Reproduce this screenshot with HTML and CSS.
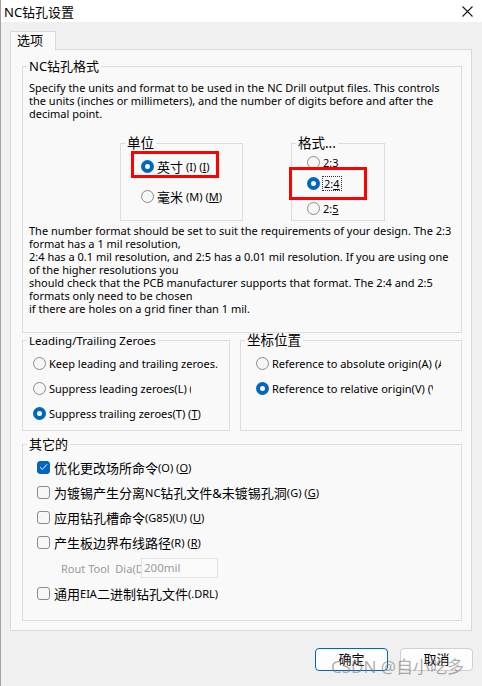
FILE: index.html
```html
<!DOCTYPE html>
<html lang="zh-CN">

<head>
    <meta charset="UTF-8">
    <meta name="viewport" content="width=device-width, initial-scale=1.0">
    <link rel="stylesheet" href="styles.css">
</head>

<body>
    <div class="window">
        <div class="titlebar">
            <span class="title">NC钻孔设置</span>
            <svg class="close" width="11" height="11" viewBox="0 0 11 11">
                <path d="M0.5 0.5L10.5 10.5M10.5 0.5L0.5 10.5" stroke="#1b1b1b" stroke-width="1.1" fill="none" />
            </svg>
        </div>

        <div class="content">
            <div class="tab">选项</div>
            <div class="panel">
                <fieldset class="group nc">
                    <legend>NC钻孔格式</legend>
                    <p class="desc">Specify the units and format to be used in the NC Drill output files. This controls<br>the units (inches or millimeters), and the number of digits before and after the<br>decimal point.</p>

                    <div class="format-row">
                        <fieldset class="group unit">
                            <legend class="big">单位</legend>
                            <div class="opt first"><span class="radio on"></span><span class="cn">英寸</span><span class="key">(I) (<u>I</u>)</span></div>
                            <div class="opt second"><span class="radio"></span><span class="cn">毫米</span><span class="key">(M) (<u>M</u>)</span></div>
                        </fieldset>
                        <fieldset class="group fmt">
                            <legend class="big">格式...</legend>
                            <div class="opt f1"><span class="radio"></span><span>2:<u>3</u></span></div>
                            <div class="opt f2"><span class="radio on"></span><span class="focus">2:<u>4</u></span></div>
                            <div class="opt f3"><span class="radio"></span><span>2:<u>5</u></span></div>
                        </fieldset>
                    </div>

                    <p class="desc second-desc">The number format should be set to suit the requirements of your design. The 2:3<br>format has a 1 mil resolution,<br>2:4 has a 0.1 mil resolution, and 2:5 has a 0.01 mil resolution. If you are using one<br>of the higher resolutions you<br>should check that the PCB manufacturer supports that format. The 2:4 and 2:5<br>formats only need to be chosen<br>if there are holes on a grid finer than 1 mil.</p>
                </fieldset>

                <div class="pair">
                    <fieldset class="group zeroes">
                        <legend>Leading/Trailing Zeroes</legend>
                        <div class="opt row"><span class="radio"></span><span class="clip keep">Keep leading and trailing zeroes.(K) (K)</span></div>
                        <div class="opt row"><span class="radio"></span><span class="clip lead">Suppress leading zeroes(L) (L)</span></div>
                        <div class="opt row"><span class="radio on"></span><span>Suppress trailing zeroes(T) (<u>T</u>)</span></div>
                    </fieldset>
                    <fieldset class="group origin">
                        <legend class="big">坐标位置</legend>
                        <div class="opt row"><span class="radio"></span><span class="clip abs">Reference to absolute origin(A) (A)</span></div>
                        <div class="opt row"><span class="radio on"></span><span class="clip rel">Reference to relative origin(V) (V)</span></div>
                    </fieldset>
                </div>

                <fieldset class="group other">
                    <legend>其它的</legend>
                    <div class="opt check-row">
                        <span class="check on"><svg width="9" height="8" viewBox="0 0 9 8"><path d="M1 4.2L3.4 6.5L8 1.3" stroke="#fff" stroke-width="1" fill="none" /></svg></span>
                        <span class="cn">优化更改场所命令</span><span class="key">(O) (<u>O</u>)</span>
                    </div>
                    <div class="opt check-row">
                        <span class="check"></span>
                        <span class="cn">为镀锡产生分离</span><span class="key">NC</span><span class="cn">钻孔文件&amp;未镀锡孔洞</span><span class="key">(G) (<u>G</u>)</span>
                    </div>
                    <div class="opt check-row">
                        <span class="check"></span>
                        <span class="cn">应用钻孔槽命令</span><span class="key">(G85)(U) (<u>U</u>)</span>
                    </div>
                    <div class="opt check-row">
                        <span class="check"></span>
                        <span class="cn">产生板边界布线路径</span><span class="key">(R) (<u>R</u>)</span>
                    </div>
                    <div class="rout-row">
                        <span class="rout-label">Rout Tool&nbsp;&nbsp;Dia(D)</span>
                        <span class="rout-input">200mil</span>
                    </div>
                    <div class="opt check-row last">
                        <span class="check"></span>
                        <span class="cn">通用</span><span class="key">EIA</span><span class="cn">二进制钻孔文件</span><span class="key">(.DRL)</span>
                    </div>
                </fieldset>
            </div>

            <div class="buttons">
                <div class="button default">确定</div>
                <div class="button">取消</div>
            </div>
        </div>

        <div class="mark mark-unit"></div>
        <div class="mark mark-fmt"></div>
        <div class="watermark">CSDN @自小吃多</div>
    </div>
</body>

</html>
```

FILE: styles.css
```css
* {
    box-sizing: border-box;
}

body {
    margin: 0;
    background-color: #f0f0f0;
    font-family: "Noto Sans", "Noto Sans CJK SC", sans-serif;
    font-size: 11px;
    color: #000;
}

.window {
    position: relative;
    width: 482px;
    height: 686px;
    border-left: 1px solid #a3a3a3;
    overflow: hidden;
}

.titlebar {
    height: 22px;
    background-color: #fff;
    display: flex;
    align-items: center;
    justify-content: space-between;
    padding: 0 9px 0 3px;
}

.title {
    font-size: 13px;
}

.close {
    display: block;
}

.content {
    padding: 9px 10px 0 9px;
}

.tab {
    position: relative;
    z-index: 1;
    width: 46px;
    height: 19px;
    margin-bottom: -1px;
    padding-left: 6px;
    border: 1px solid #d9d9d9;
    border-bottom: none;
    background-color: #f9f9f9;
    font-size: 13px;
    line-height: 17px;
}

.panel {
    height: 582px;
    border: 1px solid #d9d9d9;
    background-color: #f9f9f9;
    padding: 8px 9px 0 11px;
}

/* group boxes */
.group {
    margin: 0;
    padding: 0;
    min-width: 0;
    border: 1px solid #dcdcdc;
}

.group legend {
    margin-left: 4px;
    padding: 0 2px;
    font-size: 13px;
    line-height: 17px;
}

.group legend.big {
    font-size: 13.5px;
}

.zeroes legend {
    font-size: 11.5px;
}

.nc {
    padding-bottom: 17px;
}

.desc {
    margin: 6px 0 0 6px;
    line-height: 13px;
    white-space: nowrap;
}

.second-desc {
    margin-top: 3px;
}

.format-row {
    display: flex;
    gap: 48px;
    margin: 15px 0 0 97px;
}

.unit {
    width: 123px;
    height: 86px;
}

.fmt {
    width: 94px;
    height: 86px;
}

/* options */
.opt {
    display: flex;
    align-items: center;
    height: 16px;
    gap: 3px;
    white-space: nowrap;
}

.cn {
    font-size: 13px;
}

.key {
    font-size: 11px;
}

.unit .opt {
    margin-left: 20px;
}

.unit .first {
    margin-top: 6px;
}

.unit .second {
    margin-top: 14px;
}

.fmt .opt {
    margin-left: 15px;
}

.fmt .f1 {
    margin-top: 2px;
}

.fmt .f2 {
    margin-top: 5px;
}

.fmt .f3 {
    margin-top: 9px;
}

.focus {
    padding: 0 1px;
    outline: 1px dotted #333;
    line-height: 13px;
}

.radio {
    flex: none;
    width: 13px;
    height: 13px;
    border-radius: 50%;
    border: 1px solid #8b8b8b;
    background-color: #f6f6f6;
}

.radio.on {
    border: 4px solid #0067c0;
    background-color: #fff;
}

.check {
    flex: none;
    display: flex;
    align-items: center;
    justify-content: center;
    width: 13px;
    height: 13px;
    margin-right: 1px;
    border: 1px solid #8b8b8b;
    border-radius: 3px;
    background-color: #f7f7f7;
}

.check.on {
    border-color: #0067c0;
    background-color: #0067c0;
}

.check svg {
    display: block;
}

.pair {
    display: flex;
    gap: 10px;
    margin-top: -1px;
}

.zeroes {
    width: 208px;
    height: 99px;
}

.origin {
    width: 222px;
    height: 99px;
}

.row {
    margin-top: 9px;
}

.zeroes .row {
    margin-left: 10px;
}

.origin .row {
    margin-left: 15px;
}

.zeroes .row:first-of-type,
.origin .row:first-of-type {
    margin-top: 6px;
}

.clip {
    overflow: hidden;
}

.keep {
    width: 169px;
}

.lead {
    width: 142px;
}

.abs {
    width: 169px;
}

.rel {
    width: 161px;
}

.other {
    height: 185px;
    margin-top: 5px;
}

.check-row {
    margin: 9px 0 0 14px;
    gap: 0;
}

.check-row:first-of-type {
    margin-top: 6px;
}

.check-row .check {
    margin-right: 4px;
}

.check-row.last {
    margin-top: 7px;
}

.rout-row {
    display: flex;
    align-items: center;
    height: 20px;
    margin: 8px 0 0 38px;
    color: #9a9a9a;
}

.rout-label {
    width: 80px;
    overflow: hidden;
    white-space: nowrap;
}

.rout-input {
    width: 77px;
    height: 20px;
    padding-left: 2px;
    border: 1px solid #e3e3e3;
    background-color: #fafafa;
    line-height: 18px;
    font-size: 11.5px;
}

/* dialog buttons */
.buttons {
    display: flex;
    justify-content: flex-end;
    gap: 12px;
    margin: 17px -1px 0 0;
}

.button {
    width: 73px;
    height: 23px;
    border: 1px solid #d0d0d0;
    border-radius: 4px;
    background-color: #fdfdfd;
    text-align: center;
    font-size: 13px;
    line-height: 21px;
}

.button.default {
    border-color: #0067c0;
}

/* screenshot annotations */
.mark {
    position: absolute;
    border: 3px solid #ff0000;
}

.mark-unit {
    left: 130px;
    top: 151px;
    width: 88px;
    height: 27px;
}

.mark-fmt {
    left: 288px;
    top: 167px;
    width: 78px;
    height: 33px;
}

.watermark {
    position: absolute;
    left: 330px;
    top: 653px;
    font-size: 17px;
    color: rgba(120, 120, 120, 0.6);
    white-space: nowrap;
}
```
